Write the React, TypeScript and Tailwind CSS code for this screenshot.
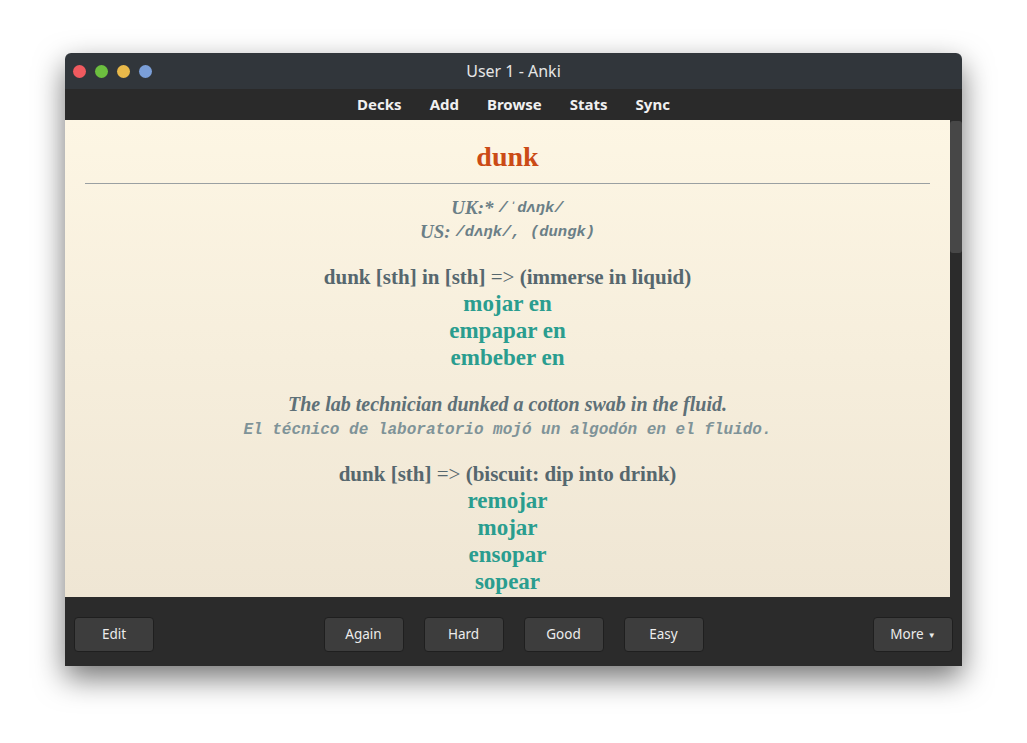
const serif = "font-['Liberation_Serif','Times_New_Roman',serif]";
const mono = "font-['Liberation_Mono','DejaVu_Sans_Mono',monospace]";

const menuItems = ['Decks', 'Add', 'Browse', 'Stats', 'Sync'];
const answerButtons = ['Again', 'Hard', 'Good', 'Easy'];

function Meaning({ head, arrowText, words }: { head: string; arrowText: string; words: string[] }) {
  return (
    <div>
      <div className={`${serif} h-[26px] text-[21px] leading-[26px] font-bold text-[#56676e]`}>
        {head} <span className="font-normal">=&gt;</span> {arrowText}
      </div>
      {words.map((w) => (
        <div key={w} className={`${serif} text-[23px] leading-[27px] font-bold text-[#2a9d8f]`}>
          {w}
        </div>
      ))}
    </div>
  );
}

function ToolButton({ label, caret }: { label: string; caret?: boolean }) {
  return (
    <button className="w-20 h-[35px] rounded-[4px] bg-[#3d3d3d] border border-[#1f1f1f] text-[13.5px] text-[#ececec] font-['Noto_Sans',sans-serif] flex items-center justify-center gap-1">
      {label}
      {caret && <span className="text-[8px] leading-none">▼</span>}
    </button>
  );
}

function Pron({ label, ipa }: { label: string; ipa: string }) {
  return (
    <div className="h-6 leading-6 flex items-center justify-center gap-[5px]">
      <span className={`${serif} italic font-bold text-[19px] leading-6`}>{label}</span>
      <span className={`${mono} italic font-bold text-[15.5px] leading-6`}>{ipa}</span>
    </div>
  );
}

export default function App() {
  return (
    <div className="w-[1027px] h-[743px] bg-white pl-[65px] pt-[53px] overflow-hidden">
      <div className="w-[897px] h-[613px] flex flex-col rounded-t-[6px] overflow-hidden shadow-[0_12px_30px_rgba(0,0,0,0.55)] font-['Noto_Sans',sans-serif]">
        {/* title bar */}
        <div className="h-9 bg-[#31363b] flex items-center relative">
          <div className="flex items-center gap-[9px] pl-[8px]">
            <span className="w-[13px] h-[13px] rounded-full bg-[#ef5a5f]" />
            <span className="w-[13px] h-[13px] rounded-full bg-[#6cbf3f]" />
            <span className="w-[13px] h-[13px] rounded-full bg-[#e9b94a]" />
            <span className="w-[13px] h-[13px] rounded-full bg-[#7b9fd8]" />
          </div>
          <div className="absolute inset-0 flex items-center justify-center text-[16px] text-[#e6e6e6]">
            User 1 - Anki
          </div>
        </div>

        {/* menu */}
        <div className="h-[31px] bg-[#2a2a2a] flex items-center justify-center gap-7 text-[15px] font-bold text-[#f0f0f0]">
          {menuItems.map((m) => (
            <span key={m}>{m}</span>
          ))}
        </div>

        {/* card */}
        <div className="h-[477px] flex">
          <div className="flex-1 overflow-hidden bg-gradient-to-b from-[#fdf6e4] to-[#efe6d4] text-center">
            <div className={`${serif} mt-[19px] text-[28px] leading-[36px] font-bold text-[#cb4b16]`}>dunk</div>
            <div className="mx-5 mt-2 h-px bg-[#9aa0a2]" />
            <div className="mt-3 text-[#6b7f87]">
              <Pron label="UK:*" ipa="/ˈdʌŋk/" />
              <Pron label="US:" ipa="/dʌŋk/, (dungk)" />
            </div>

            <div className="mt-5">
              <Meaning
                head="dunk [sth] in [sth]"
                arrowText="(immerse in liquid)"
                words={['mojar en', 'empapar en', 'embeber en']}
              />
            </div>

            <div className="mt-[21px]">
              <div className={`${serif} h-6 italic font-bold text-[20px] leading-6 text-[#5e7077]`}>
                The lab technician dunked a cotton swab in the fluid.
              </div>
              <div className={`${mono} mt-[2px] h-6 italic font-bold text-[16px] leading-6 text-[#7f9398]`}>
                El técnico de laboratorio mojó un algodón en el fluido.
              </div>
            </div>

            <div className="mt-[19px]">
              <Meaning
                head="dunk [sth]"
                arrowText="(biscuit: dip into drink)"
                words={['remojar', 'mojar', 'ensopar', 'sopear']}
              />
            </div>
          </div>
          {/* scrollbar */}
          <div className="w-3 bg-[#2b2b2b] pt-px">
            <div className="h-[132px] rounded-[3px] bg-[#474747]" />
          </div>
        </div>

        {/* bottom bar */}
        <div className="flex-1 bg-[#2b2b2b] flex items-start justify-between px-[9px] pt-[20px]">
          <ToolButton label="Edit" />
          <div className="flex gap-5">
            {answerButtons.map((b) => (
              <ToolButton key={b} label={b} />
            ))}
          </div>
          <ToolButton label="More" caret />
        </div>
      </div>
    </div>
  );
}
